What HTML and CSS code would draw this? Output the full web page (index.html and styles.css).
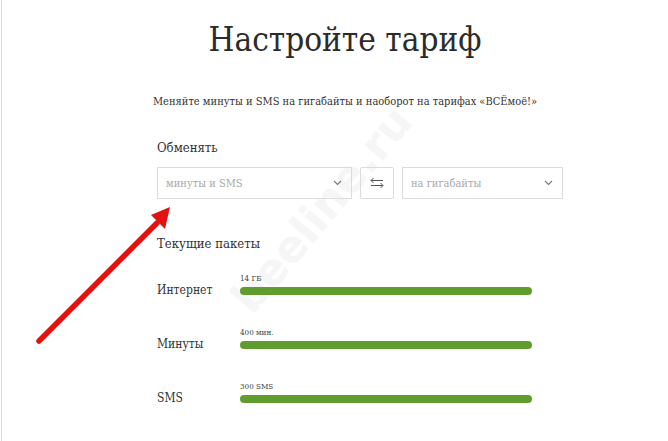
FILE: index.html
```html
<!DOCTYPE html>
<html lang="ru">
<head>
<meta charset="utf-8">
<title>Настройте тариф</title>
<link rel="stylesheet" href="styles.css">
</head>
<body>
<div class="page">
  <div class="watermark">beeline.ru</div>

  <header class="head">
    <h1 class="title">Настройте тариф</h1>
    <p class="subtitle">Меняйте минуты и SMS на гигабайты и наоборот на тарифах «ВСЁмоё!»</p>
  </header>

  <section class="exchange">
    <div class="section-label">Обменять</div>
    <div class="exchange-row">
      <div class="select select-from">
        <span class="select-text">минуты и SMS</span>
        <svg class="chev" width="9" height="6" viewBox="0 0 9 6"><path d="M1 1l3.5 3.5L8 1" fill="none" stroke="#777" stroke-width="1.1"/></svg>
      </div>
      <div class="swap">
        <svg width="16" height="12" viewBox="0 0 16 12"><path d="M14 3.5H2M4.5 1L2 3.5 4.5 6M2 8.5h12M11.5 6L14 8.5 11.5 11" fill="none" stroke="#555" stroke-width="1"/></svg>
      </div>
      <div class="select select-to">
        <span class="select-text">на гигабайты</span>
        <svg class="chev" width="9" height="6" viewBox="0 0 9 6"><path d="M1 1l3.5 3.5L8 1" fill="none" stroke="#777" stroke-width="1.1"/></svg>
      </div>
    </div>
  </section>

  <section class="packages">
    <div class="section-label pk-label">Текущие пакеты</div>
    <div class="pkg">
      <div class="pkg-name">Интернет</div>
      <div class="pkg-bar-wrap">
        <div class="pkg-amount">14 ГБ</div>
        <div class="pkg-bar"></div>
      </div>
    </div>
    <div class="pkg">
      <div class="pkg-name">Минуты</div>
      <div class="pkg-bar-wrap">
        <div class="pkg-amount">400 мин.</div>
        <div class="pkg-bar"></div>
      </div>
    </div>
    <div class="pkg">
      <div class="pkg-name">SMS</div>
      <div class="pkg-bar-wrap">
        <div class="pkg-amount">300 SMS</div>
        <div class="pkg-bar"></div>
      </div>
    </div>
  </section>

  <svg class="arrow" width="180" height="160" viewBox="0 0 180 160">
    <line x1="38" y1="140" x2="156" y2="22" stroke="#e3120f" stroke-width="5.5" stroke-linecap="round"/>
    <polygon points="169,6 150,14 164,28" fill="#e3120f"/>
  </svg>
</div>
</body>
</html>
```

FILE: styles.css
```css
* { box-sizing: border-box; }
html, body { margin: 0; padding: 0; background: #fff; }
body {
  font-family: "DejaVu Serif", "Liberation Serif", serif;
  font-stretch: condensed;
  color: #333;
  width: 668px;
  height: 441px;
  overflow: hidden;
}
.page {
  position: relative;
  width: 667px;
  height: 441px;
  border-left: 1px solid #dcdcdc;
  margin-left: 1px;
}
.head {
  position: relative;
  text-align: center;
  padding-left: 20px;
  padding-top: 16px;
}
.title {
  margin: 0;
  font-weight: normal;
  font-size: 33px;
  line-height: 48px;
  color: #2b2b2b;
}
.subtitle {
  margin: 31px 0 0;
  font-size: 11px;
  line-height: 14px;
  color: #333;
}
.exchange {
  position: relative;
  padding-left: 155px;
  margin-top: 31px;
}
.section-label {
  font-size: 13px;
  line-height: 16px;
  color: #333;
}
.exchange-row {
  display: flex;
  gap: 8px;
  margin-top: 11px;
}
.select {
  height: 32px;
  border: 1px solid #dcdcdc;
  display: flex;
  align-items: center;
  justify-content: space-between;
  padding: 0 9px 0 8px;
}
.select-from { width: 195px; }
.select-to { width: 161px; }
.select-text {
  font-size: 11px;
  color: #a8a8a8;
}
.swap {
  width: 34px;
  height: 32px;
  border: 1px solid #dcdcdc;
  border-radius: 2px;
  display: flex;
  align-items: center;
  justify-content: center;
}
.packages {
  position: relative;
  padding-left: 155px;
  margin-top: 37px;
}
.pk-label { margin-bottom: -9px; }
.pkg {
  display: flex;
  align-items: flex-end;
  height: 54px;
}
.pkg-name {
  width: 83px;
  font-size: 12px;
  line-height: 14px;
  color: #333;
}
.pkg-bar-wrap {
  width: 292px;
  padding-bottom: 2px;
}
.pkg-amount {
  font-size: 8px;
  line-height: 10px;
  color: #444;
  margin-bottom: 3px;
}
.pkg-bar {
  height: 8px;
  border-radius: 4px;
  background: #619c2f;
}
.watermark {
  position: absolute;
  left: 222px;
  top: 292px;
  font-family: "DejaVu Sans", sans-serif;
  font-stretch: normal;
  font-weight: bold;
  font-size: 44px;
  line-height: 44px;
  color: #f6f6f6;
  transform: rotate(-50deg);
  transform-origin: left top;
  white-space: nowrap;
}
.arrow {
  position: absolute;
  left: -1px;
  top: 201px;
}
```
